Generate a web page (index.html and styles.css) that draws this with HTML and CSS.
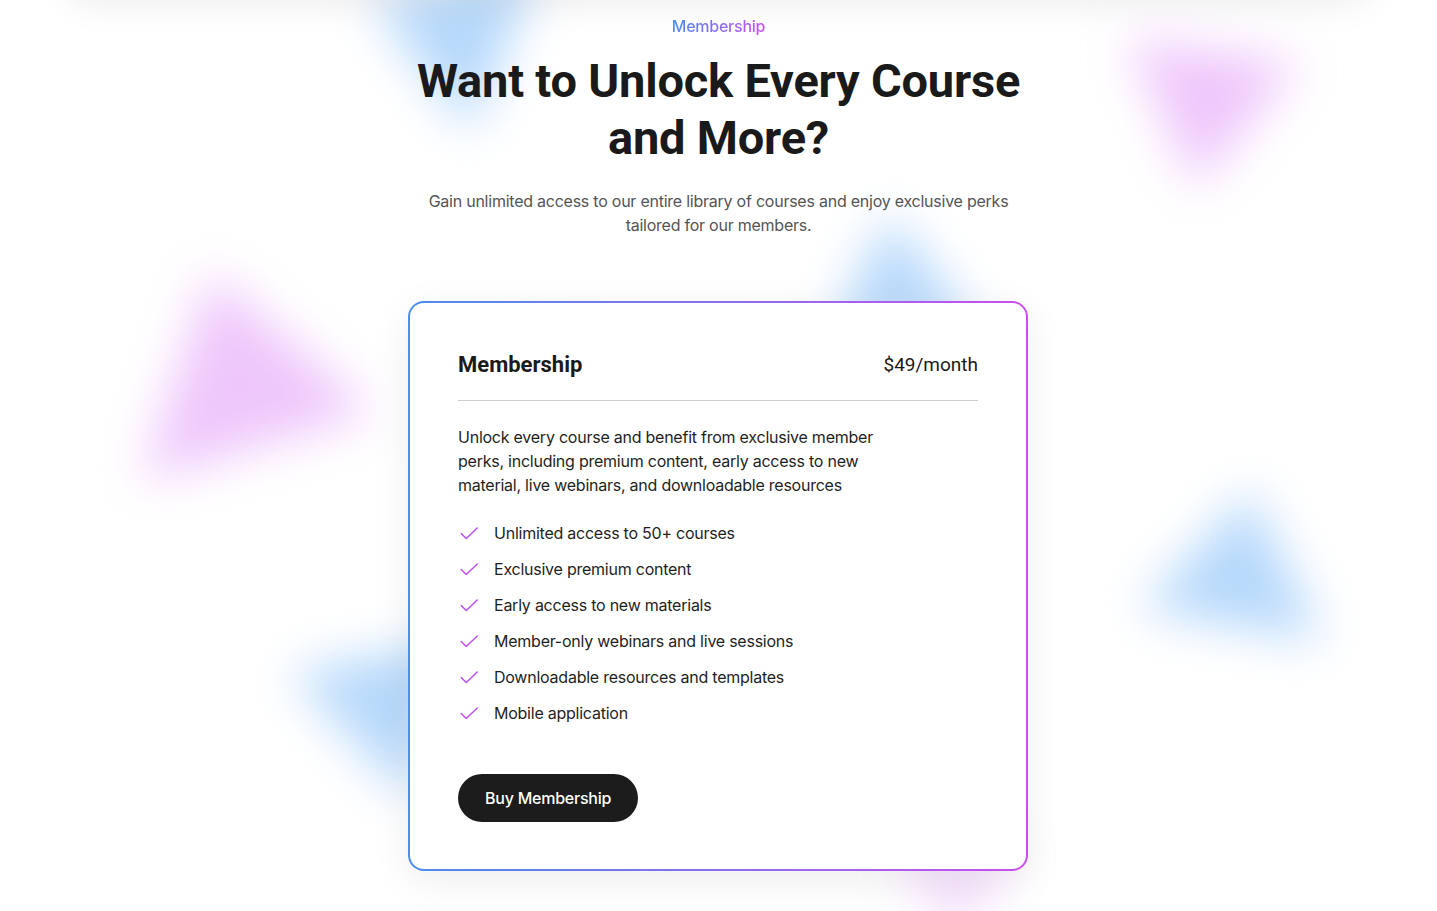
FILE: index.html
```html
<!DOCTYPE html>
<html lang="en">
<head>
<meta charset="utf-8">
<title>Membership</title>
<link rel="stylesheet" href="styles.css">
</head>
<body>
<div class="page">
  <div class="topshade"></div>
  <div class="blob blob-blue b1"></div>
  <div class="blob blob-purple b2"></div>
  <div class="blob blob-blue b3"></div>
  <div class="blob blob-purple b4"></div>
  <div class="blob blob-blue b5"></div>
  <div class="blob blob-blue b6"></div>
  <div class="blob blob-purple b7"></div>

  <section class="hero">
    <div class="eyebrow">Membership</div>
    <h1 class="title">Want to Unlock Every Course<br>and More?</h1>
    <p class="lead">Gain unlimited access to our entire library of courses and enjoy exclusive perks tailored for our members.</p>

    <div class="card">
      <div class="card-head">
        <h2 class="card-title">Membership</h2>
        <div class="price">$49/month</div>
      </div>
      <p class="card-desc">Unlock every course and benefit from exclusive member perks, including premium content, early access to new material, live webinars, and downloadable resources</p>
      <ul class="features">
        <li><svg class="check" viewBox="0 0 24 24"><path d="M3.5 12.5 L9 18 L21 6.5"/></svg>Unlimited access to 50+ courses</li>
        <li><svg class="check" viewBox="0 0 24 24"><path d="M3.5 12.5 L9 18 L21 6.5"/></svg>Exclusive premium content</li>
        <li><svg class="check" viewBox="0 0 24 24"><path d="M3.5 12.5 L9 18 L21 6.5"/></svg>Early access to new materials</li>
        <li><svg class="check" viewBox="0 0 24 24"><path d="M3.5 12.5 L9 18 L21 6.5"/></svg>Member-only webinars and live sessions</li>
        <li><svg class="check" viewBox="0 0 24 24"><path d="M3.5 12.5 L9 18 L21 6.5"/></svg>Downloadable resources and templates</li>
        <li><svg class="check" viewBox="0 0 24 24"><path d="M3.5 12.5 L9 18 L21 6.5"/></svg>Mobile application</li>
      </ul>
      <button class="buy">Buy Membership</button>
    </div>
  </section>
</div>
</body>
</html>
```
FILE: styles.css
```css
* { box-sizing: border-box; }
html, body { margin: 0; padding: 0; background: #fff; }
body { font-family: Inter, "Noto Sans", sans-serif; color: #1c1c1c; letter-spacing: -0.24px; }

.page {
  position: relative;
  width: 100%;
  height: 911px;
  overflow: hidden;
}

.topshade {
  position: absolute;
  left: 60px;
  right: 60px;
  top: -80px;
  height: 80px;
  border-radius: 0 0 40px 40px;
  box-shadow: 0 0 40px rgba(0,0,0,0.09);
  z-index: 3;
}

.blob {
  position: absolute;
  filter: blur(24px);
  z-index: 0;
}
.blob::before {
  content: "";
  position: absolute;
  inset: 0;
  clip-path: var(--shape);
}
.blob-blue::before { background: #b5d8fb; }
.blob-purple::before { background: #eec6fb; }

.b1 { left: 372px; top: -30px; width: 165px; height: 160px; --shape: polygon(0 20%, 100% 0, 60% 100%); }
.b2 { left: 1128px; top: 32px; width: 170px; height: 155px; --shape: polygon(0 5%, 100% 20%, 40% 100%); }
.b3 { left: 832px; top: 215px; width: 145px; height: 115px; --shape: polygon(40% 0, 100% 100%, 0 100%); }
.b4 { left: 142px; top: 274px; width: 230px; height: 206px; --shape: polygon(30% 0, 100% 67%, 0 100%); }
.b5 { left: 292px; top: 642px; width: 165px; height: 155px; --shape: polygon(0 20%, 100% 0, 70% 100%); }
.b6 { left: 1142px; top: 492px; width: 180px; height: 156px; --shape: polygon(60% 0, 100% 95%, 0 75%); }
.b7 { left: 893px; top: 848px; width: 124px; height: 84px; opacity: 0.6; --shape: polygon(0 0, 100% 10%, 50% 100%); }

.hero {
  position: relative;
  z-index: 1;
  display: flex;
  flex-direction: column;
  align-items: center;
  padding-top: 14px;
}

.eyebrow {
  font-size: 16px;
  line-height: 24px;
  font-weight: 500;
  background: linear-gradient(90deg, #4d8ef0, #c94ff0);
  -webkit-background-clip: text;
  background-clip: text;
  color: transparent;
}

.title {
  margin: 14px 0 0;
  font-family: Roboto, "Liberation Sans", sans-serif;
  font-weight: 700;
  font-size: 47px;
  line-height: 57px;
  letter-spacing: -0.2px;
  text-align: center;
  color: #1a1a1a;
}

.lead {
  margin: 23px 0 0;
  max-width: 600px;
  font-size: 16px;
  line-height: 24px;
  color: #555;
  text-align: center;
}

.card {
  margin: 64px 1px 0 0;
  width: 620px;
  border: 2px solid transparent;
  border-radius: 16px;
  background:
    linear-gradient(#fff, #fff) padding-box,
    linear-gradient(90deg, #4b8df1, #c94ff0) border-box;
  box-shadow: 0 10px 40px rgba(0,0,0,0.07);
  padding: 48px 48px 47px;
}

.card-head {
  display: flex;
  justify-content: space-between;
  align-items: center;
  padding-bottom: 21px;
  border-bottom: 1px solid #cfcfcf;
}

.card-title {
  margin: 0;
  font-family: Roboto, "Liberation Sans", sans-serif;
  font-weight: 700;
  font-size: 22px;
  line-height: 28px;
  letter-spacing: 0;
  color: #1a1a1a;
}

.price {
  font-family: Roboto, "Liberation Sans", sans-serif;
  font-size: 19px;
  line-height: 28px;
  letter-spacing: 0;
  color: #1a1a1a;
}

.card-desc {
  margin: 24px 0 0;
  max-width: 440px;
  font-size: 16px;
  line-height: 24px;
  color: #1f1f1f;
}

.features {
  list-style: none;
  margin: 24px 0 0;
  padding: 0;
  display: flex;
  flex-direction: column;
  gap: 12px;
}

.features li {
  display: flex;
  align-items: center;
  gap: 14px;
  font-size: 16px;
  line-height: 24px;
  color: #1f1f1f;
}

.check {
  width: 22px;
  height: 22px;
  flex: none;
  fill: none;
  stroke: #b94ee8;
  stroke-width: 1.6;
  stroke-linecap: round;
  stroke-linejoin: round;
}

.buy {
  margin-top: 49px;
  height: 48px;
  padding: 0 27px;
  border: none;
  border-radius: 24px;
  background: #1c1c1c;
  color: #fff;
  font-family: Inter, "Noto Sans", sans-serif;
  font-size: 16px;
  font-weight: 500;
  letter-spacing: -0.24px;
  cursor: pointer;
}
```
